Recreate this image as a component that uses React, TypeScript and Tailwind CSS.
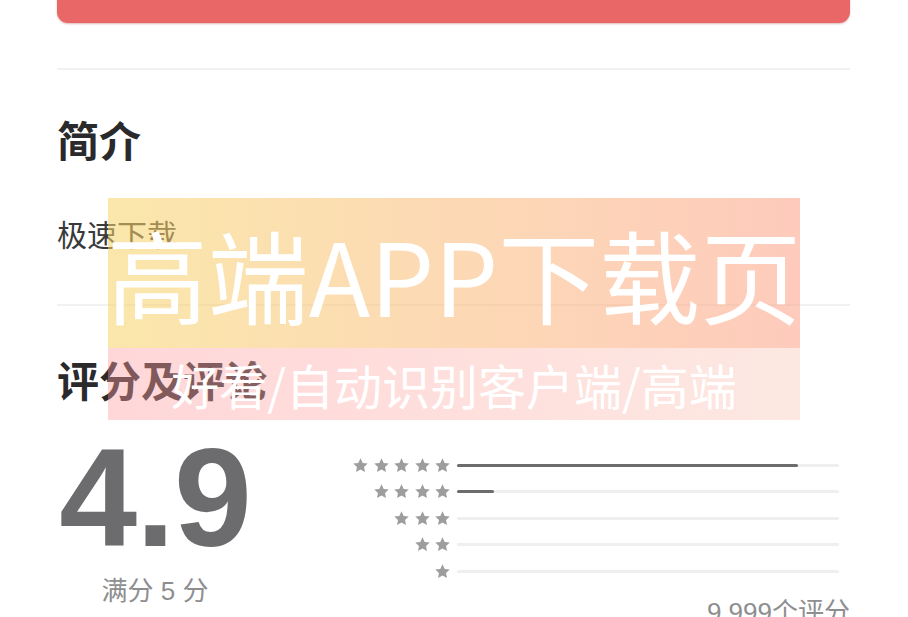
import React from "react";

const CJK = "font-['Liberation_Sans','Noto_Sans_CJK_SC',sans-serif]";

type Bar = { stars: number; pct: number };

const BARS: Bar[] = [
  { stars: 5, pct: 89.3 },
  { stars: 4, pct: 9.7 },
  { stars: 3, pct: 0 },
  { stars: 2, pct: 0 },
  { stars: 1, pct: 0 },
];

function Star() {
  return (
    <svg viewBox="0 0 24 24" className="w-[17px] h-[17px] fill-[#9d9d9d]">
      <path d="M12 1.8l3.1 6.6 7.1.9-5.2 4.9 1.3 7.1L12 17.8l-6.3 3.5 1.3-7.1L1.8 9.3l7.1-.9z" />
    </svg>
  );
}

export default function App() {
  return (
    <div className={`relative w-[908px] h-[617px] overflow-hidden bg-white ${CJK}`}>
      <div className="px-[57px] pr-[58px]">
        {/* 获取按钮（只露出底部） */}
        <div className="mt-[-37px] h-[60px] rounded-[11px] bg-[#ea6767] shadow-[0_1px_2px_rgba(150,60,60,0.35)]" />

        <div className="mt-[45px] h-[2px] bg-[#f1f1f1]" />

        <h2 className="mt-[48px] text-[42px] leading-[50px] font-bold text-[#2a2a2c]">简介</h2>
        <p className="mt-[50px] text-[30px] leading-[36px] text-[#3a3a3c]">极速下载</p>

        <div className="mt-[50px] h-[2px] bg-[#f1f1f1]" />

        <h2 className="mt-[52px] text-[42px] leading-[50px] font-bold text-[#2a2a2c]">评分及评论</h2>

        <div className="flex mt-[20px]">
          <div className="w-[196px] flex flex-col items-center shrink-0">
            <div className="text-[140px] leading-none font-bold text-[#6c6c6e] tracking-[-1px] font-['Liberation_Sans',sans-serif]">
              4.9
            </div>
            <div className="mt-[8px] text-[26px] leading-[30px] text-[#8e8e90]">满分 5 分</div>
          </div>

          <div className="flex-1 pl-[94px]">
            <div className="mt-[24px] flex flex-col">
              {BARS.map((b) => (
                <div key={b.stars} className="h-[26.5px] flex items-center">
                  <div className="w-[104px] flex justify-end gap-[3.5px]">
                    {Array.from({ length: b.stars }).map((_, i) => (
                      <Star key={i} />
                    ))}
                  </div>
                  <div className="ml-[6px] w-[382px] h-[3px] bg-[#efefef] rounded-full">
                    <div className="h-full bg-[#6c6c6e] rounded-full" style={{ width: `${b.pct}%` }} />
                  </div>
                </div>
              ))}
            </div>
            <div className="mt-[12px] text-right text-[26px] leading-[30px] text-[#8e8e90]">9,999个评分</div>
          </div>
        </div>
      </div>

      {/* 水印横幅 */}
      <div className="absolute left-[108px] top-[198px] w-[692px] font-['Noto_Sans_CJK_SC',sans-serif] text-white">
        <div className="h-[150px] flex items-center justify-center bg-gradient-to-r from-[#f6d365]/55 to-[#fda085]/55">
          <span className="text-[101px] leading-none whitespace-nowrap">高端APP下载页</span>
        </div>
        <div className="h-[72px] flex items-center justify-center bg-gradient-to-r from-[#ff9a9e]/40 to-[#fad0c4]/50">
          <span className="text-[48px] leading-none whitespace-nowrap">好看/自动识别客户端/高端</span>
        </div>
      </div>
    </div>
  );
}
